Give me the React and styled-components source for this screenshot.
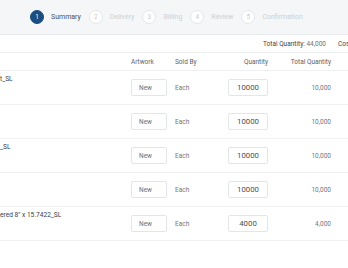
import React from "react";
import styled, { createGlobalStyle } from "styled-components";

const Global = createGlobalStyle`
  html, body {
    margin: 0;
    padding: 0;
    background: #fff;
    overflow: hidden;
  }
  body {
    font-family: Roboto, "Liberation Sans", sans-serif;
    -webkit-font-smoothing: antialiased;
  }
`;

const Page = styled.div`
  width: 420px;
  height: 268px;
  background: #fff;
`;

const Steps = styled.div`
  height: 34px;
  background: #f5f6f7;
  border-bottom: 1px solid #e9ebec;
  display: flex;
  align-items: center;
  padding-left: 30px;
  gap: 8px;
`;

const Step = styled.div`
  display: flex;
  align-items: center;
  gap: 7px;
`;

const Dot = styled.span`
  width: 14px;
  height: 14px;
  border-radius: 50%;
  box-sizing: border-box;
  display: flex;
  align-items: center;
  justify-content: center;
  font-size: 6.5px;
  background: ${(p) => (p.active ? "#1c4d80" : "#fff")};
  color: ${(p) => (p.active ? "#fff" : "#c9cccf")};
  border: 1px solid ${(p) => (p.active ? "#1c4d80" : "#e4e6e8")};
`;

const StepLabel = styled.span`
  font-size: 7px;
  color: ${(p) => (p.active ? "#4a4f55" : "#cdd0d3")};
`;

const TotalBar = styled.div`
  height: 17px;
  border-bottom: 1px solid #eceeef;
  display: flex;
  align-items: center;
  padding-left: 263px;
  gap: 12px;
  font-size: 6.5px;
  color: #3f4348;
  white-space: nowrap;
`;

const TotalValue = styled.span`
  color: #6d7278;
`;

const Row = styled.div`
  display: grid;
  grid-template-columns: 131px 44px 53px 40px 63px 1fr;
  height: ${(p) => (p.head ? "17px" : "33px")};
  border-bottom: 1px solid #eff0f1;
  align-items: center;
  font-size: 6.5px;
  color: #6b7076;
`;

const HeadCell = styled.div`
  text-align: ${(p) => (p.right ? "right" : "left")};
  color: #5d6268;
`;

const Name = styled.div`
  align-self: start;
  padding-top: 4px;
  font-size: 6.6px;
  color: #3c4045;
  white-space: nowrap;
`;

const Box = styled.div`
  height: 17px;
  box-sizing: border-box;
  border: 1px solid #e3e6e8;
  border-radius: 2px;
  background: #fff;
  display: flex;
  align-items: center;
  justify-content: ${(p) => (p.center ? "center" : "flex-start")};
  padding-left: ${(p) => (p.center ? "0" : "7px")};
  font-size: ${(p) => (p.center ? "7.8px" : "6.5px")};
  color: ${(p) => (p.center ? "#4a4e53" : "#6b7076")};
`;

const ArtBox = styled(Box)`
  width: 36px;
`;

const Cell = styled.div`
  text-align: ${(p) => (p.right ? "right" : "left")};
  color: #72777d;
`;

const steps = ["Summary", "Delivery", "Billing", "Review", "Confirmation"];

const rows = [
  { name: "t_SL", qty: "10000", total: "10,000" },
  { name: "", qty: "10000", total: "10,000" },
  { name: "_SL", qty: "10000", total: "10,000" },
  { name: "", qty: "10000", total: "10,000" },
  { name: "ered 8\" x 15.7422_SL", qty: "4000", total: "4,000" },
];

export default function App() {
  return (
    <Page>
      <Global />
      <Steps>
        {steps.map((s, i) => (
          <Step key={s}>
            <Dot active={i === 0}>{i + 1}</Dot>
            <StepLabel active={i === 0}>{s}</StepLabel>
          </Step>
        ))}
      </Steps>
      <TotalBar>
        <span>
          Total Quantity: <TotalValue>44,000</TotalValue>
        </span>
        <span>Cost: $0.00</span>
      </TotalBar>
      <Row head>
        <div />
        <HeadCell>Artwork</HeadCell>
        <HeadCell>Sold By</HeadCell>
        <HeadCell right>Quantity</HeadCell>
        <HeadCell right>Total Quantity</HeadCell>
        <div />
      </Row>
      {rows.map((r, i) => (
        <Row key={i}>
          <Name>{r.name}</Name>
          <ArtBox>New</ArtBox>
          <Cell>Each</Cell>
          <Box center>{r.qty}</Box>
          <Cell right>{r.total}</Cell>
          <div />
        </Row>
      ))}
    </Page>
  );
}
